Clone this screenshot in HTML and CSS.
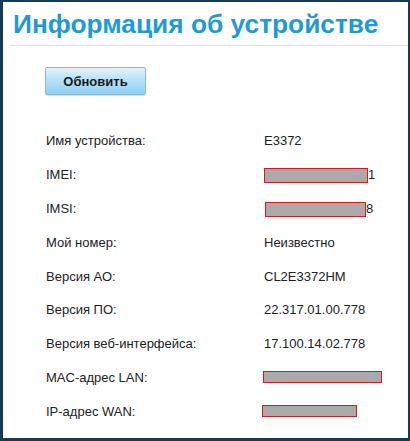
FILE: index.html
```html
<!DOCTYPE html>
<html>
<head>
<meta charset="utf-8">
<link rel="stylesheet" href="styles.css">
</head>
<body>
<div class="frame">
  <h1 class="title">Информация об устройстве</h1>
  <div class="content">
    <button class="btn">Обновить</button>
    <div class="table">
      <div class="row"><span class="label">Имя устройства:</span><span class="value">E3372</span></div>
      <div class="row"><span class="label">IMEI:</span><span class="value"><span class="mask w104"></span>1</span></div>
      <div class="row"><span class="label">IMSI:</span><span class="value"><span class="mask w101 s1"></span>8</span></div>
      <div class="row"><span class="label">Мой номер:</span><span class="value">Неизвестно</span></div>
      <div class="row"><span class="label">Версия АО:</span><span class="value">CL2E3372HM</span></div>
      <div class="row"><span class="label">Версия ПО:</span><span class="value">22.317.01.00.778</span></div>
      <div class="row"><span class="label">Версия веб-интерфейса:</span><span class="value">17.100.14.02.778</span></div>
      <div class="row"><span class="label">MAC-адрес LAN:</span><span class="value"><span class="mask w119 n1 thin"></span></span></div>
      <div class="row"><span class="label">IP-адрес WAN:</span><span class="value"><span class="mask w95 n2 thin"></span></span></div>
    </div>
  </div>
</div>
</body>
</html>
```
FILE: styles.css
```css
html, body { margin: 0; padding: 0; background: #163a55; }
.frame {
  box-sizing: border-box;
  width: 410px;
  height: 441px;
  background: #fff;
  border: 2px solid #163a55;
  border-left-width: 3px;
  border-bottom-width: 3px;
  font-family: "Liberation Sans", Arial, sans-serif;
  overflow: hidden;
}
.title {
  margin: 0 0 0 7px;
  padding: 7px 0 6px 3px;
  font-size: 26.3px;
  font-weight: bold;
  color: #1f9ad3;
  line-height: 30px;
  border-bottom: 1px solid #dcdfe2;
  white-space: nowrap;
}
.content { padding: 21px 0 0 42px; }
.btn {
  display: block;
  width: 101px;
  height: 28px;
  border: 1px solid #8fb8d4;
  border-radius: 2px;
  background: linear-gradient(#e4f4fd 0%, #b6e1f8 45%, #8fd0f4 100%);
  font-family: "Liberation Sans", Arial, sans-serif;
  font-size: 13px;
  font-weight: bold;
  color: #1a1a1a;
  padding: 0;
  box-shadow: 0 1px 1px rgba(0,0,0,0.15);
}
.table { margin-top: 38px; }
.row {
  display: flex;
  align-items: flex-start;
  height: 33.9px;
  font-size: 13px;
  color: #222;
  line-height: 15px;
}
.label { width: 218px; padding-left: 1px; }
.value { display: flex; align-items: flex-start; height: 15px; }
.mask {
  display: block;
  flex: none;
  box-sizing: border-box;
  height: 15px;
  background: #aaaaaa;
  border: 1px solid #e0161c;
  margin-top: 1px;
}
.mask.thin { height: 12px; margin-top: 1px; }
.s1 { margin-left: 1px; }
.n1 { margin-left: -1px; }
.n2 { margin-left: -2px; }
.w104 { width: 104px; }
.w101 { width: 101px; }
.w119 { width: 119px; }
.w95 { width: 95px; }
```
